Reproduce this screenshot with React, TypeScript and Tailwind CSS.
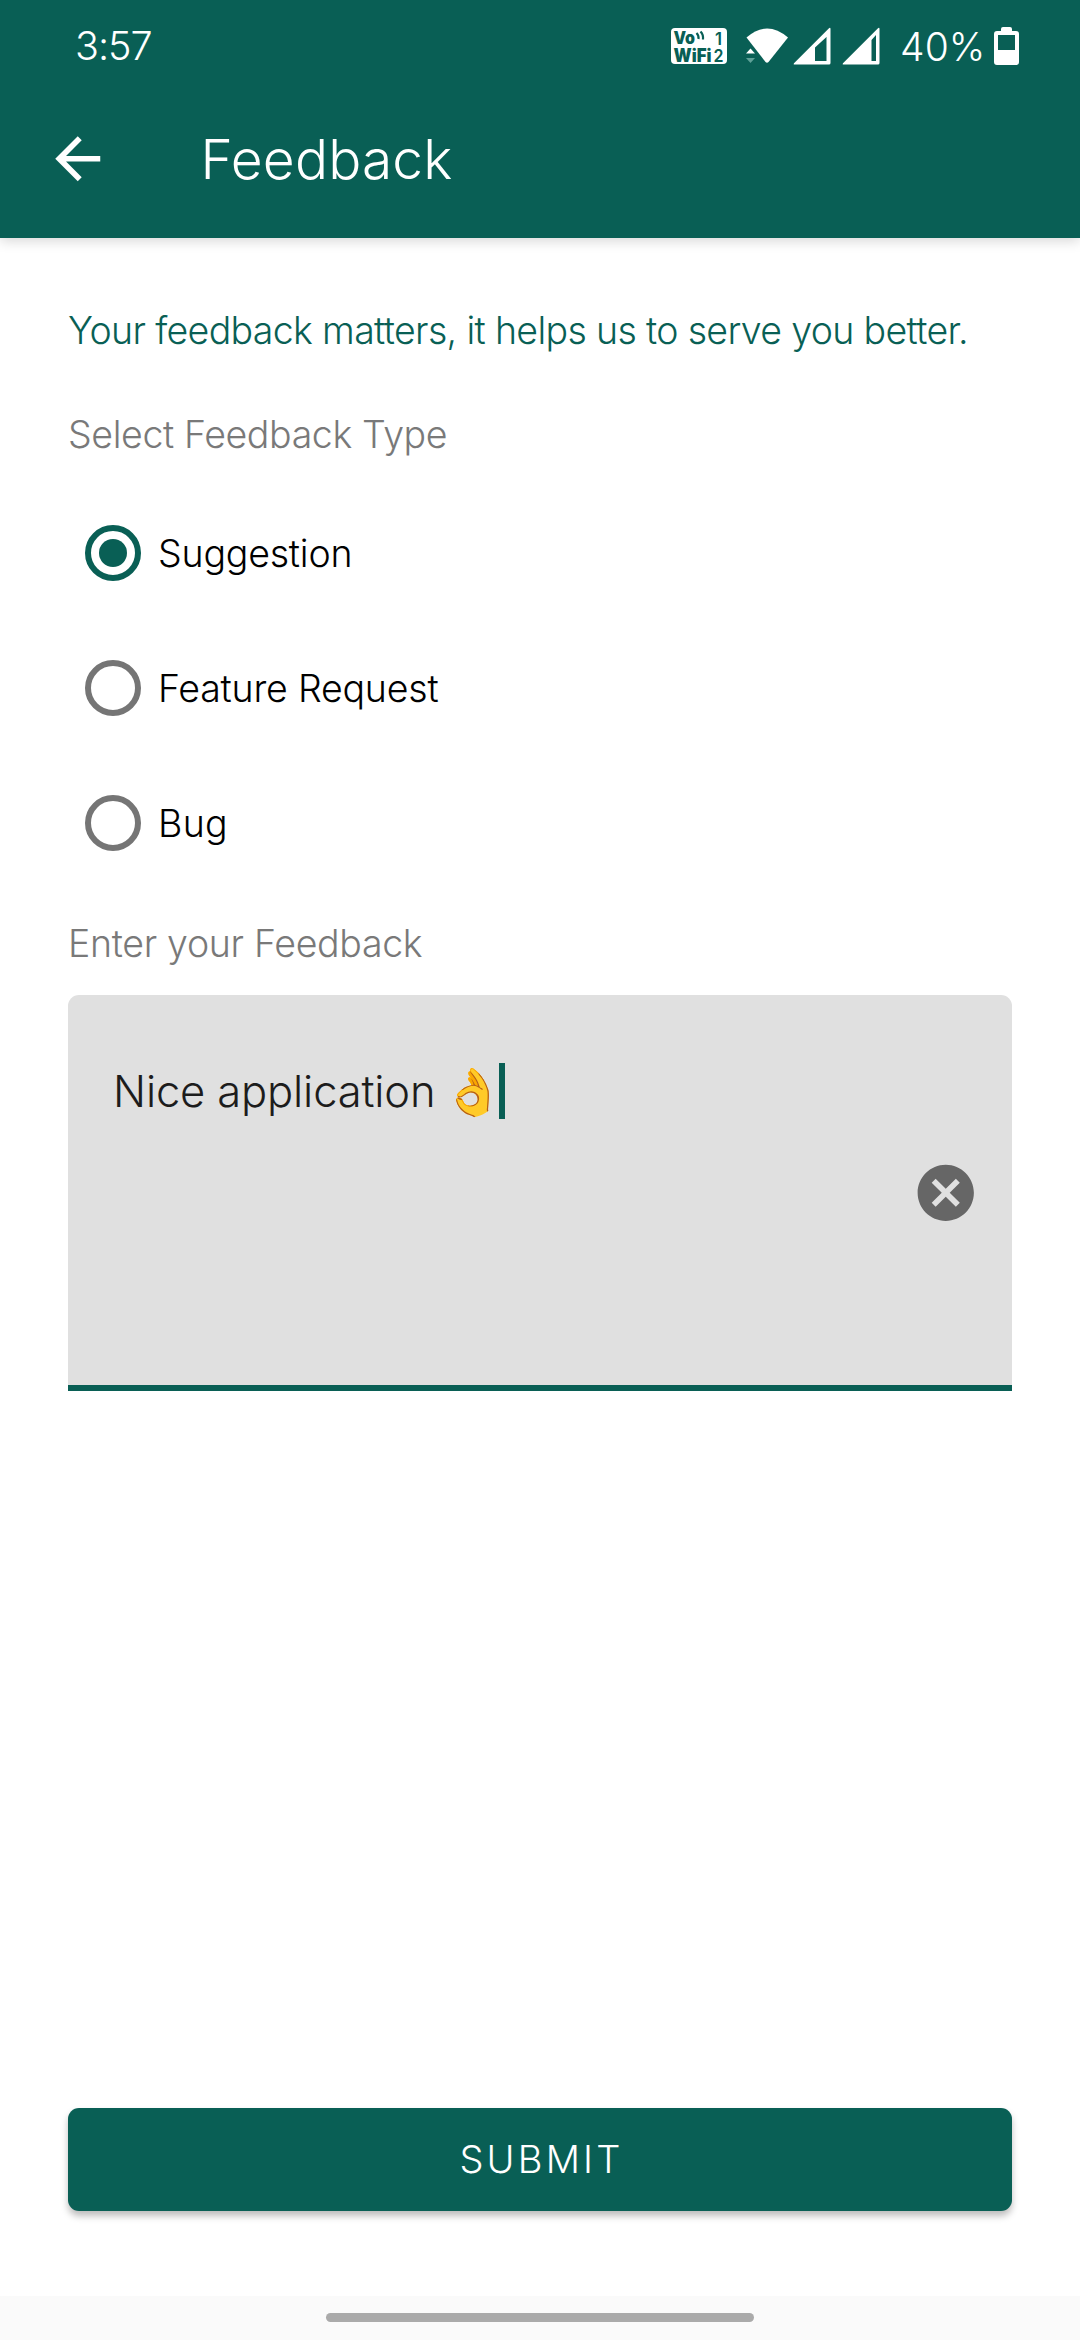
import { useState } from "react";

const options = [
  { label: "Suggestion", tracking: "tracking-[-0.2px]" },
  { label: "Feature Request", tracking: "tracking-[-0.22px]" },
  { label: "Bug", tracking: "tracking-[0.3px]" },
];

function VoWifiBadge() {
  return (
    <svg width="56" height="36" viewBox="0 0 56 36" className="shrink-0">
      <rect width="56" height="36" rx="4" fill="#fff" />
      <g fill="#095f55" fontFamily="Inter, sans-serif">
        <text x="2.5" y="16" fontSize="17.500" fontWeight="900" textLength="21.500" lengthAdjust="spacingAndGlyphs">Vo</text>
        <text x="44" y="17" fontSize="17.500" fontWeight="600" textLength="7" lengthAdjust="spacingAndGlyphs">1</text>
        <text x="2.5" y="33.500" fontSize="18.500" fontWeight="900" textLength="38" lengthAdjust="spacingAndGlyphs">WiFi</text>
        <text x="42.500" y="33.500" fontSize="17.500" fontWeight="600" textLength="10" lengthAdjust="spacingAndGlyphs">2</text>
      </g>
      <path d="M25.500 5q2.500 2.500 2 6M29.500 3.500q3 3 2.500 8" fill="none" stroke="#095f55" strokeWidth="2.200" />
    </svg>
  );
}

function WifiIcon() {
  return (
    <svg width="42" height="36" viewBox="0 0 42 36" className="ml-[19px] shrink-0">
      <path d="M0.5 9.5Q21-8.500 42 9.500L22.500 34Q21 35.500 19.500 34Z" fill="#fff" />
      <path d="M-1 28.500H11L4.500 18.500Z" fill="#095f55" />
      <path d="M0 25.500H9L4.500 20.500Z" fill="#fff" />
      <path d="M0 30H9L4.500 35Z" fill="#5fa198" />
    </svg>
  );
}

function SignalIcon({ cutout, className }: { cutout: string; className: string }) {
  return (
    <svg width="38" height="38" viewBox="0 0 38 38" className={className}>
      <path d={`M36 1.200Q37.500 0 37.500 2V36Q37.500 37.500 36 37.500H1.200Q0 37.500 1 36.300Z${cutout}`} fill="#fff" fillRule="evenodd" />
    </svg>
  );
}

function BatteryIcon() {
  return (
    <svg width="25" height="38" viewBox="0 0 25 38" className="ml-[13px] shrink-0">
      <path
        d="M9 0H16Q18 0 18 2V4H22Q25 4 25 7V35Q25 38 22 38H3Q0 38 0 35V7Q0 4 3 4H7V2Q7 0 9 0ZM4 8V23H21V8Z"
        fill="#fff"
        fillRule="evenodd"
      />
    </svg>
  );
}

export default function App() {
  const [selected, setSelected] = useState("Suggestion");

  return (
    <div className="flex h-[2340px] w-[1080px] flex-col bg-white font-['Inter',sans-serif] font-light">
      <header className="h-[238px] shrink-0 bg-[#095f55] text-white shadow-[0_3px_12px_rgba(0,0,0,0.16)]">
        <div className="flex h-[79px] items-center justify-between pt-[13px] pr-[61px] pl-[75px]">
          <span className="pt-[2px] text-[39.5px] leading-none tracking-[-1px]">3:57</span>
          <div className="flex items-center">
            <VoWifiBadge />
            <WifiIcon />
            <SignalIcon className="ml-[5px] shrink-0" cutout="M33.500 10V34H22V20.500Z" />
            <SignalIcon className="ml-[11px] shrink-0" cutout="M34 8V34H29.500V13Z" />
            <span className="ml-[20px] w-[81px] text-[39px] leading-none tracking-[0.1px]">40%</span>
            <BatteryIcon />
          </div>
        </div>
        <div className="flex h-[159px] items-center pl-[44px]">
          <svg width="67.500" height="67.500" viewBox="0 0 24 24" fill="#fff">
            <path d="M20 11H7.830l5.590-5.590L12 4l-8 8 8 8 1.410-1.410L7.830 13H20v-2z" />
          </svg>
          <h1 className="ml-[89px] pt-[2px] text-[55px] leading-none tracking-[0.15px]">Feedback</h1>
        </div>
      </header>

      <main className="flex flex-1 flex-col px-[68px] pt-[70px]">
        <p className="text-[37.5px] leading-[46px] tracking-[-0.66px] whitespace-nowrap text-[#095f55]">
          Your feedback matters, it helps us to serve you better.
        </p>
        <h2 className="mt-[58px] text-[37.5px] leading-[46px] tracking-[-0.38px] text-[#797979]">Select Feedback Type</h2>

        <div role="radiogroup" className="mt-[67px] flex flex-col gap-[79px] pl-[17px]">
          {options.map(({ label, tracking }) => {
            const on = label === selected;
            return (
              <button key={label} role="radio" aria-checked={on} onClick={() => setSelected(label)} className="flex h-[56px] items-center gap-[17px] text-left">
                <span className={`flex size-[56px] items-center justify-center rounded-full border-[6px] ${on ? "border-[#095f55]" : "border-[#757575]"}`}>
                  {on && <span className="size-[28px] rounded-full bg-[#095f55]" />}
                </span>
                <span className={`pt-[2px] text-[37.5px] leading-[46px] text-black ${tracking}`}>{label}</span>
              </button>
            );
          })}
        </div>

        <h2 className="mt-[70px] text-[37.5px] leading-[46px] tracking-[-0.32px] text-[#797979]">Enter your Feedback</h2>
        <div className="mt-[28px] flex h-[396px] items-center justify-between rounded-t-[11px] border-b-[6px] border-[#095f55] bg-[#e0e0e0] pr-[33px] pl-[45px]">
          <div className="flex h-full items-start pt-[68px]">
            <span className="text-[43.5px] leading-[56px] tracking-[-0.14px] whitespace-nowrap text-[#1c1c1c]">Nice application</span>
            <span className="ml-[11px] flex w-[53px] scale-x-[1.12] justify-center text-[46px] leading-[56px]">👌</span>
            <span className="h-[56px] w-[6px] bg-[#095f55]" />
          </div>
          <svg width="67.500" height="67.500" viewBox="0 0 24 24" fill="#666" className="mt-[6px]">
            <path d="M12 2C6.470 2 2 6.470 2 12s4.470 10 10 10 10-4.470 10-10S17.530 2 12 2zm5 13.590L15.590 17 12 13.410 8.410 17 7 15.590 10.590 12 7 8.410 8.410 7 12 10.590 15.590 7 17 8.410 13.410 12 17 15.590z" />
          </svg>
        </div>

        <button className="mt-auto mb-[85px] h-[103px] shrink-0 rounded-[11px] bg-[#095f55] pl-[3px] text-[38px] tracking-[3.2px] text-white shadow-[0_5px_7px_rgba(0,0,0,0.26)]">
          SUBMIT
        </button>
      </main>

      <footer className="flex h-[44px] shrink-0 justify-center bg-[#fafafa] pt-[17px]">
        <span className="h-[9px] w-[428px] rounded-full bg-[#aaaaaa]" />
      </footer>
    </div>
  );
}
